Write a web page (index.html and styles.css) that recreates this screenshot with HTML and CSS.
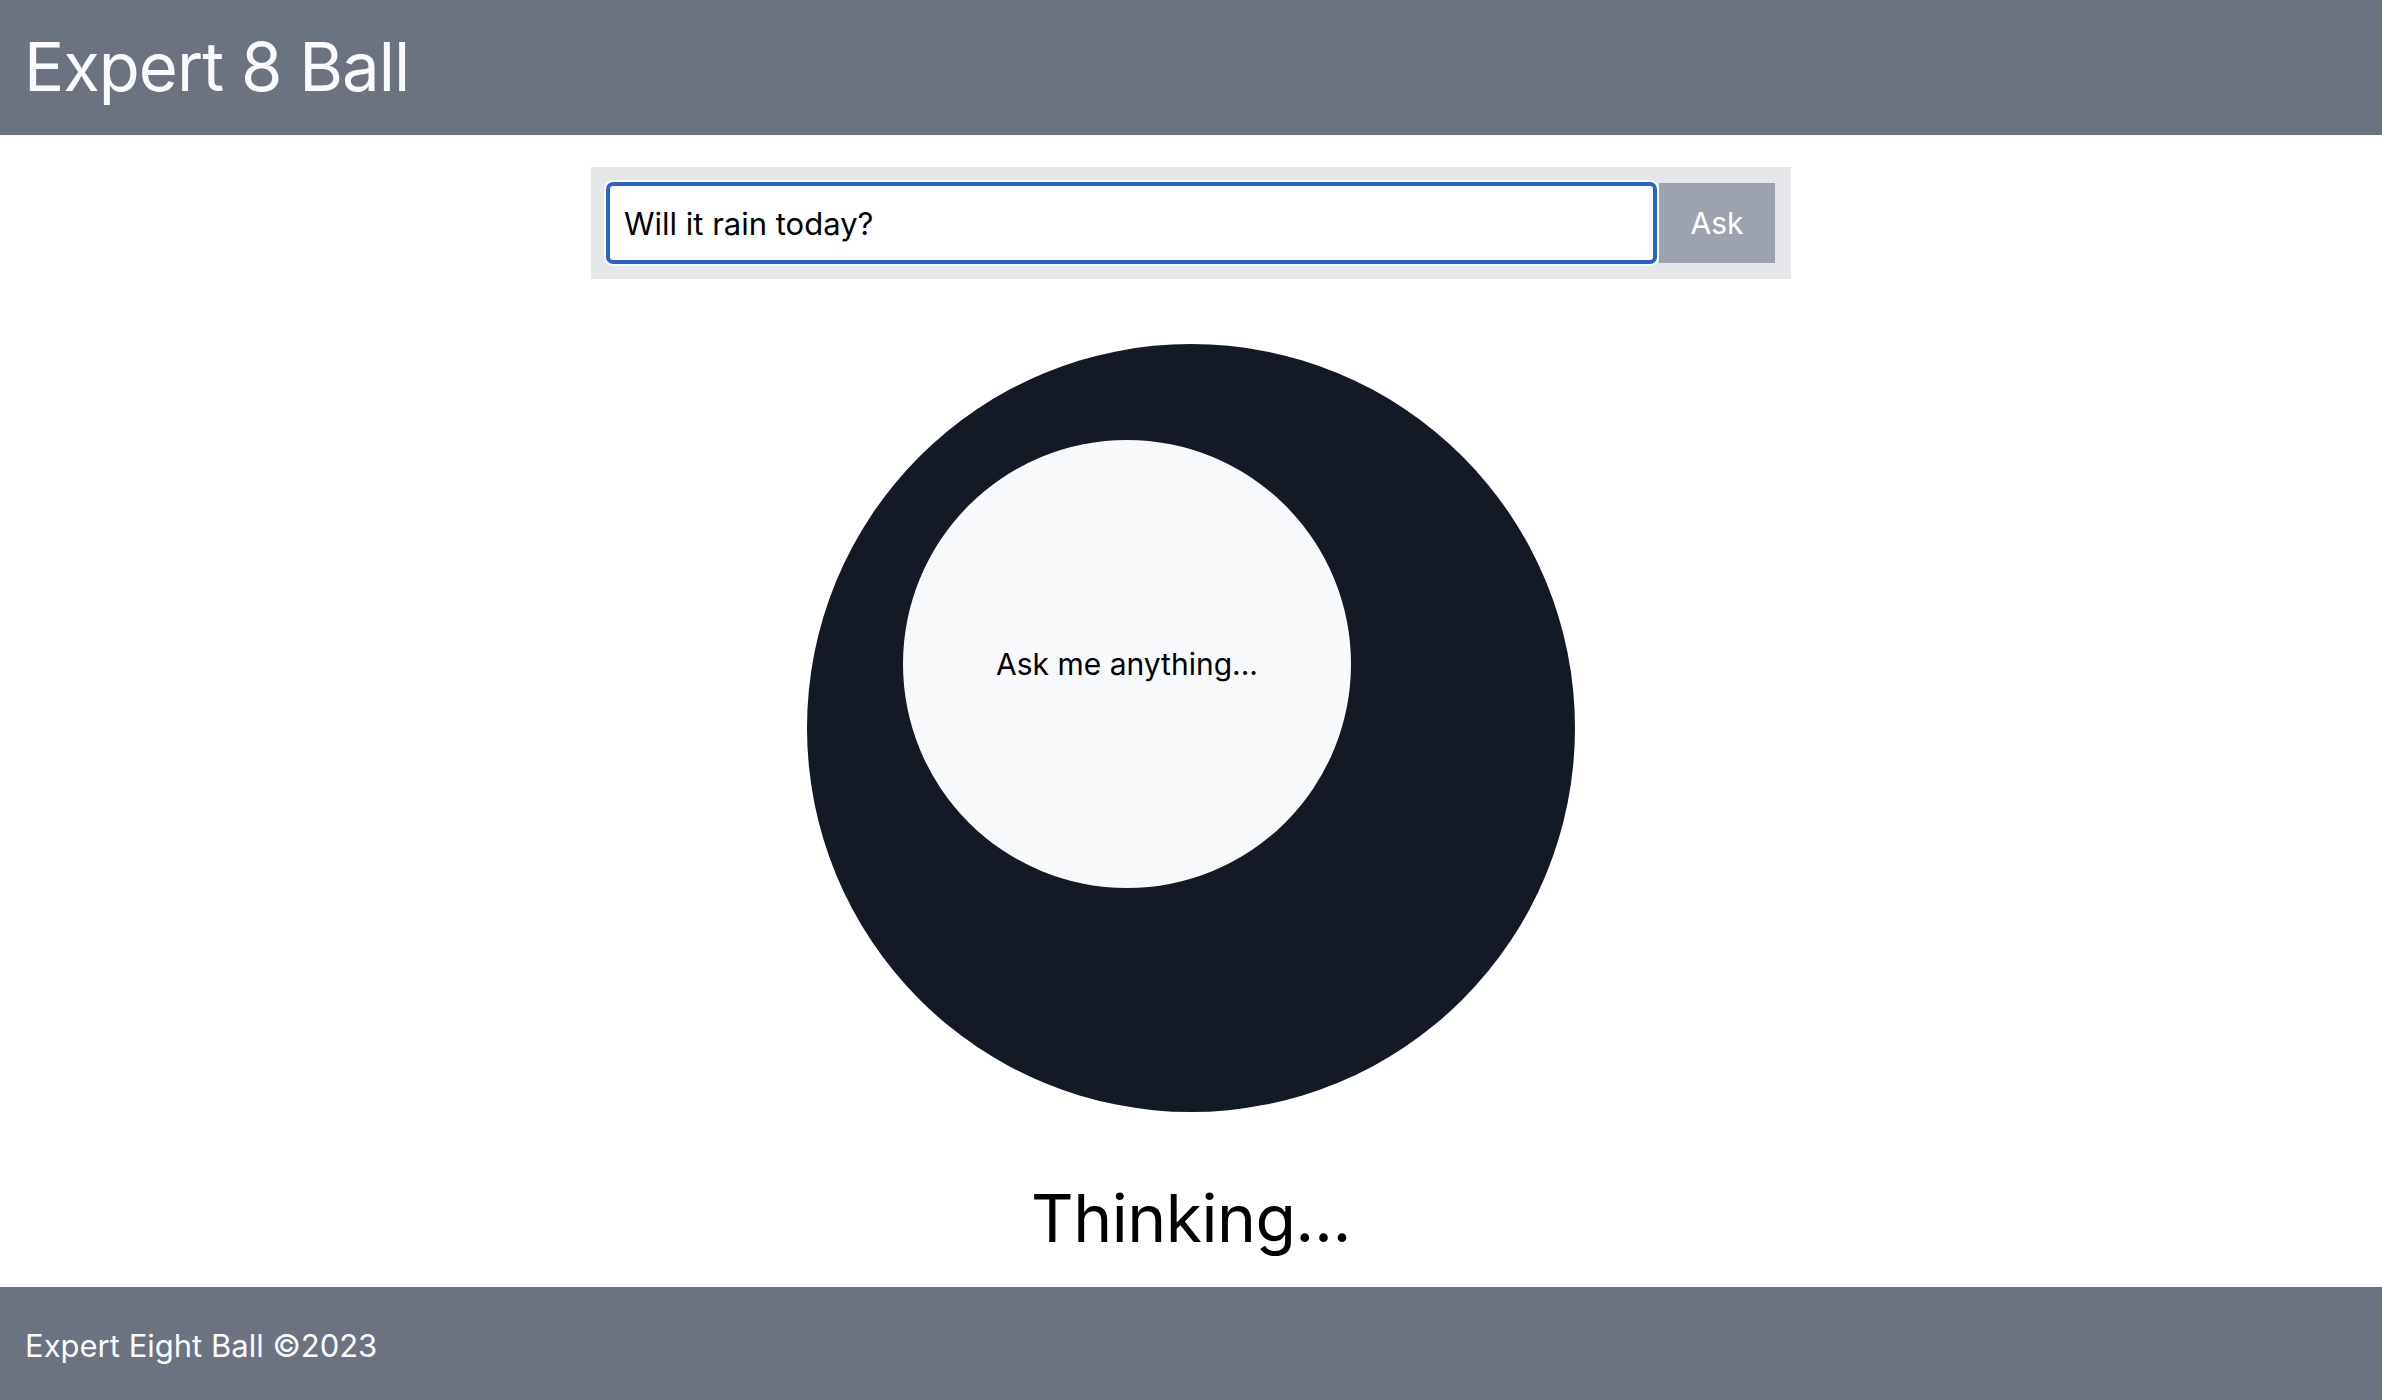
FILE: index.html
```html
<!DOCTYPE html>
<html lang="en">
<head>
<meta charset="utf-8">
<title>Expert 8 Ball</title>
<link rel="stylesheet" href="styles.css">
</head>
<body>
<div class="page">
  <header class="header">
    <h1 class="title">Expert 8 Ball</h1>
  </header>
  <main class="main">
    <form class="ask-form">
      <input class="ask-input" type="text" value="Will it rain today?">
      <button class="ask-button" type="button">Ask</button>
    </form>
    <div class="ball">
      <div class="window">
        <span class="window-text">Ask me anything...</span>
      </div>
    </div>
    <p class="status">Thinking...</p>
  </main>
  <footer class="footer">
    <span class="footer-text">Expert Eight Ball ©2023</span>
  </footer>
</div>
</body>
</html>
```
FILE: styles.css
```css
* { box-sizing: border-box; }
html, body { margin: 0; padding: 0; }
body {
  font-family: Inter, "Noto Sans", "Liberation Sans", sans-serif;
  background: #ffffff;
  color: #000000;
}
.page {
  min-height: 1400px;
  display: flex;
  flex-direction: column;
}
.header {
  height: 135px;
  background: #6b7280;
  display: flex;
  align-items: center;
  padding: 0 24px 2px;
}
.title {
  margin: 0;
  font-size: 67px;
  font-weight: 400;
  line-height: 1;
  color: #f9fafb;
  letter-spacing: -1px;
}
.main {
  flex: 1;
  display: flex;
  flex-direction: column;
  align-items: center;
  padding-top: 32px;
}
.ask-form {
  width: 1200px;
  padding: 16px;
  background: #e5e7eb;
  display: flex;
  margin: 0;
}
.ask-input {
  flex: 1;
  height: 80px;
  margin: 0 3px 0 0;
  border: 3px solid #2a64c8;
  border-radius: 6px;
  box-shadow: 0 0 0 1px #2a64c8, 0 0 0 3px #ffffff;
  padding: 0 14px;
  font-family: Inter, "Noto Sans", "Liberation Sans", sans-serif;
  font-size: 31px;
  color: #000000;
  background: #ffffff;
  outline: none;
}
.ask-button {
  width: 116px;
  height: 80px;
  border: none;
  background: #9ca3af;
  color: #ffffff;
  font-family: Inter, "Noto Sans", "Liberation Sans", sans-serif;
  font-size: 30px;
  padding: 0;
}
.ball {
  margin-top: 65px;
  width: 768px;
  height: 768px;
  border-radius: 50%;
  background: #141926;
  padding: 96px 0 0 96px;
}
.window {
  width: 448px;
  height: 448px;
  border-radius: 50%;
  background: #f8f9fb;
  display: flex;
  align-items: center;
  justify-content: center;
}
.window-text {
  font-size: 30px;
  color: #000000;
}
.status {
  margin: 73px 0 0 0;
  font-size: 66px;
  line-height: 1;
  color: #000000;
  letter-spacing: -0.5px;
}
.footer {
  height: 113px;
  background: #6b7280;
  display: flex;
  align-items: center;
  padding: 4px 25px 0;
}
.footer-text {
  color: #f9fafb;
  font-size: 31px;
}
```
